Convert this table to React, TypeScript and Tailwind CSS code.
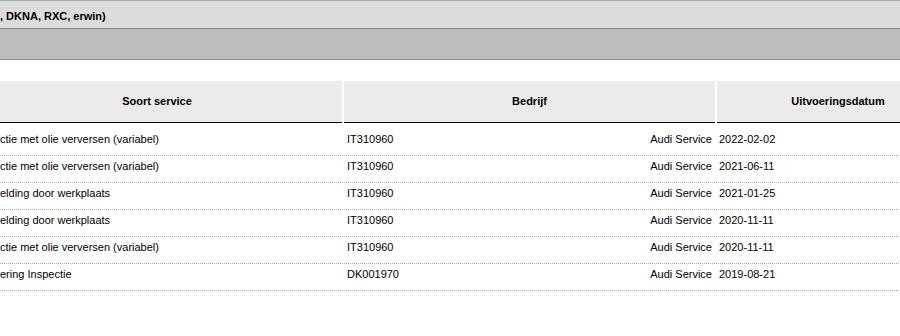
import React from "react";

const rows = [
  { service: "ctie met olie verversen (variabel)", code: "IT310960", company: "Audi Service", date: "2022-02-02" },
  { service: "ctie met olie verversen (variabel)", code: "IT310960", company: "Audi Service", date: "2021-06-11" },
  { service: "elding door werkplaats", code: "IT310960", company: "Audi Service", date: "2021-01-25" },
  { service: "elding door werkplaats", code: "IT310960", company: "Audi Service", date: "2020-11-11" },
  { service: "ctie met olie verversen (variabel)", code: "IT310960", company: "Audi Service", date: "2020-11-11" },
  { service: "ering Inspectie", code: "DK001970", company: "Audi Service", date: "2019-08-21" },
];

export default function App() {
  return (
    <div
      className="w-[900px] h-[336px] overflow-hidden bg-white text-[11px] text-black"
      style={{ fontFamily: '"Liberation Sans", Arial, sans-serif' }}
    >
      <div className="h-[29px] border-t border-b border-t-[#a8a8a8] border-b-[#888888] bg-[#dcdcdc] pt-[9px] leading-[13px] font-bold whitespace-nowrap">
        , DKNA, RXC, erwin)
      </div>
      <div className="h-[31px] border-b border-[#8c8c8c] bg-[#bebebe]" />
      <div className="h-[21px]" />
      <div className="ml-[-28px] w-[987px]">
        <div className="flex gap-[2px] font-bold">
          <div className="w-[370px] h-[42px] bg-[#ebebeb] border-b border-black flex items-center justify-center">
            Soort service
          </div>
          <div className="w-[371px] h-[42px] bg-[#ebebeb] border-b border-black flex items-center justify-center">
            Bedrijf
          </div>
          <div className="w-[242px] h-[42px] bg-[#ebebeb] border-b border-black flex items-center justify-center">
            Uitvoeringsdatum
          </div>
        </div>
        <div className="h-[6px]" />
        {rows.map((r, i) => (
          <div
            key={i}
            className="flex gap-[2px] h-[27px] border-b border-dotted border-[#a8a8a8] leading-[13px] pt-[4px] whitespace-nowrap"
          >
            <div className="w-[370px] pl-[28px]">{r.service}</div>
            <div className="w-[371px] flex justify-between pl-[3px] pr-[3px]">
              <span>{r.code}</span>
              <span>{r.company}</span>
            </div>
            <div className="w-[242px] pl-[2px]">{r.date}</div>
          </div>
        ))}
      </div>
    </div>
  );
}
